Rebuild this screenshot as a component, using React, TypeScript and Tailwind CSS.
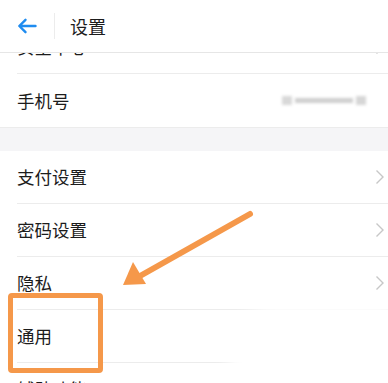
const rows = ['支付设置', '密码设置', '隐私']

function Chevron() {
  return (
    <svg width="10" height="16" viewBox="0 0 10 16" className="shrink-0">
      <polyline points="1.5,1.5 8,8 1.5,14.5" fill="none" stroke="#c7c7c7" strokeWidth="1.4" />
    </svg>
  )
}

function Row({ label, chevron = true, children }: { label: string; chevron?: boolean; children?: React.ReactNode }) {
  return (
    <div className="pl-[17px] bg-white">
      <div className="h-[53px] flex items-center border-b border-[#ececec] pr-[3px]">
        <span className="text-[17.5px] text-[#1c1c1c] leading-none flex-1">{label}</span>
        {children}
        {chevron && <Chevron />}
      </div>
    </div>
  )
}

export default function App() {
  return (
    <div
      className="w-[388px] h-[383px] overflow-hidden bg-white relative"
      style={{ fontFamily: '"Noto Sans CJK SC", "Noto Sans", sans-serif' }}
    >
      {/* header */}
      <header className="h-[53px] flex items-center bg-white border-b border-[#e6e6e6] relative z-10">
        <div className="w-[54px] flex justify-center">
          <svg width="20" height="16" viewBox="0 0 20 16">
            <path d="M18.5 8H2.5M8.5 1.8L2.3 8l6.2 6.2" fill="none" stroke="#1f8cf0" strokeWidth="2.4" strokeLinecap="round" strokeLinejoin="round" />
          </svg>
        </div>
        <div className="w-px h-[26px] bg-[#ececec]" />
        <span className="ml-[15px] text-[18px] text-[#1c1c1c] leading-none">设置</span>
      </header>

      {/* list */}
      <div className="-mt-[32px]">
        <Row label="安全中心" />
        <div className="pl-[17px] bg-white">
          <div className="h-[53px] flex items-center">
            <span className="text-[17.5px] text-[#1c1c1c] leading-none flex-1">手机号</span>
            <div className="mr-[22px] flex items-center gap-[3px] blur-[1.5px]">
              <div className="w-[10px] h-[9px] bg-[#d8d8d8]" />
              <div className="w-[58px] h-[5px] bg-[#cfcfcf]" />
              <div className="w-[10px] h-[9px] bg-[#d6d6d6]" />
            </div>
          </div>
        </div>
        <div className="h-[24px] bg-[#f5f5f7] border-t border-[#ececec]" />
        {rows.map((r) => (
          <Row key={r} label={r} />
        ))}
        <Row label="通用" chevron={false} />
        <Row label="辅助功能" />
      </div>

      {/* white smudge at lower right */}
      <div className="absolute right-[-40px] bottom-[-30px] w-[200px] h-[110px] rounded-full bg-white blur-[8px]" />

      {/* highlight box */}
      <div className="absolute left-[8px] top-[293px] w-[95px] h-[80px] border-[5px] border-[#f5984a] rounded-[4px]" />

      {/* arrow */}
      <svg className="absolute left-0 top-0" width="388" height="383" viewBox="0 0 388 383">
        <line x1="250" y1="214" x2="140" y2="276" stroke="#f5984a" strokeWidth="6" strokeLinecap="round" />
        <polygon points="123,285 133,262 146,284" fill="#f5984a" />
      </svg>
    </div>
  )
}
